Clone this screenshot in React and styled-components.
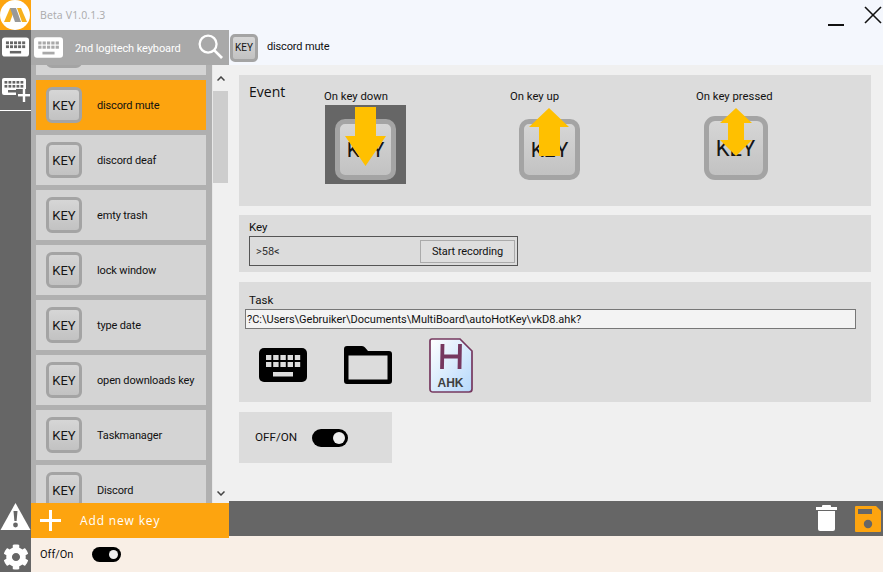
import React from "react";
import styled, { createGlobalStyle } from "styled-components";
import { FaCog } from "react-icons/fa";

const keys = [
  { name: "", clipped: true },
  { name: "discord mute", active: true },
  { name: "discord deaf" },
  { name: "emty trash" },
  { name: "lock window" },
  { name: "type date" },
  { name: "open downloads key" },
  { name: "Taskmanager" },
  { name: "Discord" },
];

const KeyboardIcon = ({ width, height, color = "#fff", cut = "#666" }) => (
  <svg width={width} height={height} viewBox="0 0 48 34">
    <rect width="48" height="34" rx="5" fill={color} />
    {[0, 1, 2, 3, 4, 5, 6, 7, 8, 9].map((i) => (
      <rect key={i} x={7 + (i % 5) * 7.2} y={i < 5 ? 7 : 14} width="5.4" height="5" fill={cut} />
    ))}
    <rect x="14" y="24" width="20" height="4.5" fill={cut} />
  </svg>
);

const LogoMark = () => (
  <svg width="31" height="30" viewBox="0 0 31 30">
    <rect width="31" height="30" fill="#fda40f" />
    <circle cx="15" cy="15" r="15" fill="#fff" />
    <polygon points="4,22 10,8 15,8 10,22" fill="#f7b11c" />
    <polygon points="10,8 16,8 21,22 15,22" fill="#999" />
    <polygon points="17,8 21,8 27,22 22,22" fill="#f7b11c" />
  </svg>
);

const AddKeyboardIcon = () => (
  <svg width="31" height="24" viewBox="0 0 31 24">
    <rect x="2" y="0" width="24" height="17" rx="2" fill="#fff" />
    {[0, 1, 2, 3, 4, 5, 6, 7, 8, 9].map((i) => (
      <rect key={i} x={4.5 + (i % 5) * 4} y={i < 5 ? 3 : 7} width="2.8" height="2.6" fill="#666" />
    ))}
    <rect x="8" y="12" width="12" height="2.5" fill="#666" />
    <rect x="16" y="11" width="15" height="13" fill="#666" />
    <rect x="18" y="16" width="12" height="2.4" fill="#fff" />
    <rect x="22.8" y="11" width="2.4" height="13" fill="#fff" />
  </svg>
);

const WarningIcon = () => (
  <svg width="31" height="29" viewBox="0 0 31 29">
    <polygon points="15.5,1 30.5,28 0.5,28" fill="#fff" />
    <polygon points="13.5,9 17.5,9 16.6,19 14.4,19" fill="#666" />
    <circle cx="15.5" cy="23" r="2.4" fill="#666" />
  </svg>
);

const SearchIcon = () => (
  <SearchSvg width="25" height="25" viewBox="0 0 26 26" fill="none" stroke="#fff">
    <circle cx="10.5" cy="10.5" r="8.8" strokeWidth="2.4" />
    <line x1="17" y1="17" x2="25" y2="25" strokeWidth="2.8" />
  </SearchSvg>
);

const PlusIcon = () => (
  <svg width="21" height="21" viewBox="0 0 21 21">
    <rect x="9" width="3" height="21" fill="#fff" />
    <rect y="9" width="21" height="3" fill="#fff" />
  </svg>
);

const FolderIcon = () => (
  <svg width="48" height="39" viewBox="0 0 48 39">
    <path
      d="M3 0 H18 Q20 0 21 1.5 L24 5 H45 Q48 5 48 8 V35 Q48 38 45 38 H3 Q0 38 0 35 V3 Q0 0 3 0 Z"
      fill="#000"
    />
    <rect x="4.5" y="9.5" width="39" height="24" fill="#dcdcdc" />
  </svg>
);

const AhkIcon = () => (
  <svg width="44" height="55" viewBox="0 0 44 55">
    <defs>
      <linearGradient id="ahkFill" x1="0" y1="0" x2="1" y2="1">
        <stop offset="0" stopColor="#ffffff" />
        <stop offset="1" stopColor="#b5d8fb" />
      </linearGradient>
    </defs>
    <path
      d="M3 1 H31 L43 13 V51 Q43 54 40 54 H4 Q1 54 1 51 V3 Q1 1 3 1 Z"
      fill="url(#ahkFill)"
      stroke="#76385f"
      strokeWidth="1.7"
    />
    <path d="M13.5 6 L13 31 M31 6 L30.5 31 M13 18.5 H31" stroke="#76385f" strokeWidth="3.8" fill="none" />
    <AhkLabel x="21.5" y="49">AHK</AhkLabel>
  </svg>
);

const TrashIcon = () => (
  <svg width="21" height="27" viewBox="0 0 21 27">
    <rect y="2" width="21" height="3" fill="#fff" />
    <rect x="6" width="9" height="3" rx="1" fill="#fff" />
    <path d="M2 6 H19 V24 Q19 26 17 26 H4 Q2 26 2 24 Z" fill="#fff" />
  </svg>
);

const SaveIcon = () => (
  <svg width="26" height="26" viewBox="0 0 26 26">
    <path d="M1 0 H21 L26 5 V25 Q26 26 25 26 H1 Q0 26 0 25 V1 Q0 0 1 0 Z" fill="#fda40f" />
    <rect x="3" y="3" width="14" height="5" fill="#666" />
    <circle cx="13" cy="18" r="4.2" fill="#666" />
  </svg>
);

const Arrow = ({ kind }) => {
  if (kind === "down") {
    return (
      <ArrowSvg width="41" height="59" viewBox="0 0 41 59" $left={20} $top={2}>
        <polygon points="10,0 31,0 31,29 41,29 20.5,59 0,29 10,29" fill="#ffc000" />
      </ArrowSvg>
    );
  }
  if (kind === "up") {
    return (
      <ArrowSvg width="40" height="48" viewBox="0 0 40 48" $left={20} $top={3}>
        <polygon points="20,0 40,19 31,19 31,48 10,48 10,19 0,19" fill="#ffc000" />
      </ArrowSvg>
    );
  }
  return (
    <ArrowSvg width="32" height="48" viewBox="0 0 32 48" $left={25} $top={3}>
      <polygon points="16,0 32,15 24,15 24,32 32,32 16,48 0,32 8,32 8,15 0,15" fill="#ffc000" />
    </ArrowSvg>
  );
};

function App() {
  return (
    <>
      <GlobalStyle />
      <Page>
        <Rail>
          <LogoMark />
          <RailKeyboard>
            <KeyboardIcon width={27} height={20} />
          </RailKeyboard>
          <RailAdd>
            <AddKeyboardIcon />
          </RailAdd>
          <RailLine />
          <RailBottom>
            <WarningIcon />
            <FaCog size={26} color="#fff" />
          </RailBottom>
        </Rail>

        <Body>
          <TitleBar>
            <Version>Beta V1.0.1.3</Version>
            <WindowButtons>
              <MinimizeMark />
              <svg width="18" height="18" viewBox="0 0 18 18" stroke="#111" strokeWidth="1.6">
                <line x1="1" y1="1" x2="17" y2="17" />
                <line x1="17" y1="1" x2="1" y2="17" />
              </svg>
            </WindowButtons>
          </TitleBar>

          <Middle>
            <Sidebar>
              <SearchBar>
                <KeyboardIcon width={29} height={21} cut="#a9a9a9" />
                <BoardName>2nd logitech keyboard</BoardName>
                <SearchIcon />
              </SearchBar>
              <ListArea>
                <KeyList>
                  {keys.map((k, i) => (
                    <KeyRow key={i} $active={k.active}>
                      <KeyCap $size={36} $font={13}>{k.clipped ? "" : "KEY"}</KeyCap>
                      <KeyName>{k.name}</KeyName>
                    </KeyRow>
                  ))}
                </KeyList>
                <Scrollbar>
                  <ScrollArrow>
                    <svg width="8" height="5" viewBox="0 0 8 5" fill="none" stroke="#444" strokeWidth="1.5">
                      <path d="M0.5 4.5 L4 1 L7.5 4.5" />
                    </svg>
                  </ScrollArrow>
                  <ScrollThumb />
                  <ScrollArrowBottom>
                    <svg width="8" height="5" viewBox="0 0 8 5" fill="none" stroke="#444" strokeWidth="1.5">
                      <path d="M0.5 0.5 L4 4 L7.5 0.5" />
                    </svg>
                  </ScrollArrowBottom>
                </Scrollbar>
              </ListArea>
              <AddButton>
                <PlusIcon />
                <AddLabel>Add new key</AddLabel>
              </AddButton>
            </Sidebar>

            <Main>
              <KeyHeader>
                <KeyCap $size={28} $font={10}>KEY</KeyCap>
                <HeaderName>discord mute</HeaderName>
              </KeyHeader>
              <Content>
                <EventPanel>
                  <EventTitle>Event</EventTitle>
                  <EventOption>
                    <OptionLabel>On key down</OptionLabel>
                    <EventTile $selected>
                      <KeyCap $size={61} $font={21} $border={5}>KEY</KeyCap>
                      <Arrow kind="down" />
                    </EventTile>
                  </EventOption>
                  <EventOption>
                    <OptionLabel>On key up</OptionLabel>
                    <EventTile>
                      <KeyCap $size={61} $font={21} $border={5}>KEY</KeyCap>
                      <Arrow kind="up" />
                    </EventTile>
                  </EventOption>
                  <EventOption>
                    <OptionLabel>On key pressed</OptionLabel>
                    <EventTile>
                      <KeyCap $size={64} $font={22} $border={5}>KEY</KeyCap>
                      <Arrow kind="both" />
                    </EventTile>
                  </EventOption>
                </EventPanel>

                <KeyPanel>
                  <FieldLabel>Key</FieldLabel>
                  <RecordBox>
                    <span>&gt;58&lt;</span>
                    <RecordButton>Start recording</RecordButton>
                  </RecordBox>
                </KeyPanel>

                <TaskPanel>
                  <TaskLabel>Task</TaskLabel>
                  <PathBox>?C:\Users\Gebruiker\Documents\MultiBoard\autoHotKey\vkD8.ahk?</PathBox>
                  <TaskIcons>
                    <KeyboardIcon width={48} height={34} color="#000" cut="#dcdcdc" />
                    <FolderIcon />
                    <AhkIcon />
                  </TaskIcons>
                </TaskPanel>

                <SwitchPanel>
                  <SwitchLabel>OFF/ON</SwitchLabel>
                  <Toggle $width={36} $height={18} />
                </SwitchPanel>
              </Content>
              <ActionBar>
                <TrashIcon />
                <SaveIcon />
              </ActionBar>
            </Main>
          </Middle>

          <Footer>
            <FooterLabel>Off/On</FooterLabel>
            <Toggle $width={29} $height={15} />
          </Footer>
        </Body>
      </Page>
    </>
  );
}

export default App;

const GlobalStyle = createGlobalStyle`
  html, body {
    margin: 0;
    padding: 0;
    background: #f0f0f0;
  }
  * {
    box-sizing: border-box;
  }
`;

const Page = styled.div`
  width: 883px;
  height: 572px;
  display: flex;
  overflow: hidden;
  font-family: Roboto, "Liberation Sans", sans-serif;
  font-size: 11px;
  color: #111;
`;

const Rail = styled.div`
  width: 31px;
  flex-shrink: 0;
  background: #666;
  display: flex;
  flex-direction: column;
`;

const RailKeyboard = styled.div`
  display: flex;
  padding: 7px 0 0 2px;
  height: 48px;
`;

const RailAdd = styled.div`
  display: flex;
  height: 32px;
`;

const RailLine = styled.div`
  height: 1px;
  background: #fff;
`;

const RailBottom = styled.div`
  margin-top: auto;
  display: flex;
  flex-direction: column;
  align-items: center;
  gap: 13px;
  padding-bottom: 2px;
`;

const Body = styled.div`
  flex: 1;
  display: flex;
  flex-direction: column;
  min-width: 0;
`;

const TitleBar = styled.div`
  height: 30px;
  background: #f4f7fd;
  display: flex;
  align-items: center;
  justify-content: space-between;
  padding-left: 9px;
`;

const Version = styled.div`
  color: #aaa;
  font-family: "Open Sans", sans-serif;
  font-size: 10.5px;
  letter-spacing: 0.15px;
`;

const WindowButtons = styled.div`
  display: flex;
  align-items: flex-start;
  gap: 20px;
  padding-right: 1px;
  height: 100%;
  padding-top: 6px;
`;

const MinimizeMark = styled.div`
  width: 16px;
  height: 2px;
  background: #111;
  margin-top: 18px;
`;

const Middle = styled.div`
  height: 506px;
  display: flex;
  align-items: flex-start;
`;

const Sidebar = styled.div`
  width: 198px;
  height: 508px;
  flex-shrink: 0;
  display: flex;
  flex-direction: column;
  position: relative;
  z-index: 1;
`;

const SearchBar = styled.div`
  height: 35px;
  background: #a9a9a9;
  display: flex;
  align-items: center;
  padding: 0 6px 0 3px;
  color: #fff;
`;

const SearchSvg = styled.svg`
  margin-top: -3px;
`;

const BoardName = styled.div`
  flex: 1;
  padding-left: 12px;
  font-size: 11px;
  letter-spacing: -0.1px;
  margin-top: 2px;
`;

const ListArea = styled.div`
  height: 438px;
  display: flex;
  overflow: hidden;
`;

const KeyList = styled.div`
  width: 182px;
  background: #b0b0b0;
  border-right: 1px solid #e8e8e8;
  padding-left: 5px;
  padding-right: 6px;
  display: flex;
  flex-direction: column;
  gap: 5px;
  margin-top: -40px;
  height: 478px;
  overflow: hidden;
  flex-shrink: 0;
`;

const KeyRow = styled.div`
  height: 50px;
  flex-shrink: 0;
  background: ${(p) => (p.$active ? "#fda40f" : "#d4d4d4")};
  display: flex;
  align-items: center;
  padding-left: 10px;
  gap: 15px;
`;

const KeyCap = styled.div`
  width: ${(p) => p.$size}px;
  height: ${(p) => p.$size}px;
  flex-shrink: 0;
  border: ${(p) => p.$border || 3}px solid #a4a4a4;
  border-radius: ${(p) => Math.round(p.$size / 6)}px;
  background: linear-gradient(#d6d6d6, #c2c2c2);
  display: flex;
  align-items: center;
  justify-content: center;
  font-size: ${(p) => p.$font}px;
  color: #151515;
`;

const KeyName = styled.div`
  font-size: 11px;
  letter-spacing: -0.15px;
  color: #111;
`;

const Scrollbar = styled.div`
  flex: 1;
  background: #f0f0f0;
  display: flex;
  flex-direction: column;
`;

const ScrollArrow = styled.div`
  height: 26px;
  display: flex;
  align-items: center;
  justify-content: center;
`;

const ScrollThumb = styled.div`
  height: 92px;
  width: 15px;
  background: #cdcdcd;
`;

const ScrollArrowBottom = styled(ScrollArrow)`
  margin-top: auto;
  height: 20px;
`;

const AddButton = styled.div`
  height: 35px;
  background: #fda40f;
  color: #fff;
  display: flex;
  align-items: center;
  padding-left: 9px;
  gap: 19px;
`;

const AddLabel = styled.div`
  font-family: "Open Sans", sans-serif;
  font-size: 12px;
  letter-spacing: 0.85px;
`;

const Main = styled.div`
  flex: 1;
  height: 506px;
  display: flex;
  flex-direction: column;
  min-width: 0;
`;

const KeyHeader = styled.div`
  height: 35px;
  background: #f4f7fd;
  display: flex;
  align-items: center;
  padding-left: 1px;
  gap: 9px;
`;

const HeaderName = styled.div`
  font-size: 11px;
  letter-spacing: -0.15px;
  margin-top: -3px;
`;

const Content = styled.div`
  flex: 1;
  background: #f0f0f0;
  padding: 10px 12px 0 10px;
  display: flex;
  flex-direction: column;
  gap: 10px;
`;

const Panel = styled.div`
  background: #dcdcdc;
`;

const EventPanel = styled(Panel)`
  height: 131px;
  margin-bottom: -1px;
  display: grid;
  grid-template-columns: 75px 186px 186px 1fr;
  padding: 9px 0 0 10px;
`;

const EventTitle = styled.div`
  font-family: "Open Sans", sans-serif;
  font-size: 14px;
  margin-top: -2px;
`;

const EventOption = styled.div`
  display: flex;
  flex-direction: column;
  padding-top: 5px;
`;

const OptionLabel = styled.div`
  font-size: 11.3px;
  height: 16px;
  line-height: 16px;
`;

const EventTile = styled.div`
  position: relative;
  width: 81px;
  height: 79px;
  background: ${(p) => (p.$selected ? "#666" : "transparent")};
  display: flex;
  align-items: flex-end;
  justify-content: center;
  padding-bottom: 4px;
  margin-left: ${(p) => (p.$selected ? "1px" : "-1px")};
`;

const ArrowSvg = styled.svg`
  position: absolute;
  left: ${(p) => p.$left}px;
  top: ${(p) => p.$top}px;
`;

const KeyPanel = styled(Panel)`
  height: 57px;
  padding: 5px 10px 0;
`;

const FieldLabel = styled.div`
  font-size: 11.5px;
  height: 16px;
  line-height: 14px;
`;

const TaskLabel = styled(FieldLabel)`
  margin-left: 4px;
`;

const RecordBox = styled.div`
  width: 269px;
  height: 30px;
  border: 1px solid #555;
  display: flex;
  align-items: center;
  justify-content: space-between;
  padding: 0 2px 0 6px;
  font-size: 11px;
  color: #333;
`;

const RecordButton = styled.div`
  width: 95px;
  height: 23px;
  border: 1px solid #aaa;
  background: #dedede;
  display: flex;
  align-items: center;
  justify-content: center;
  letter-spacing: -0.1px;
  color: #111;
`;

const TaskPanel = styled(Panel)`
  height: 120px;
  padding: 11px 15px 0 6px;
`;

const PathBox = styled.div`
  height: 20px;
  border: 1px solid #777;
  background: #f3f3f3;
  display: flex;
  align-items: center;
  padding-left: 1px;
  font-size: 11px;
`;

const TaskIcons = styled.div`
  display: flex;
  align-items: center;
  margin-top: 8px;
  padding-left: 14px;
  gap: 37px;
  height: 56px;
`;

const AhkLabel = styled.text`
  font-family: "Liberation Sans", sans-serif;
  font-size: 12px;
  font-weight: 700;
  fill: #3f3f3f;
  text-anchor: middle;
`;

const SwitchPanel = styled(Panel)`
  width: 153px;
  height: 51px;
  display: flex;
  align-items: center;
  padding-left: 16px;
  font-size: 11.7px;
`;

const SwitchLabel = styled.span`
  width: 57px;
  margin-top: -1px;
`;

const Toggle = styled.div`
  width: ${(p) => p.$width}px;
  height: ${(p) => p.$height}px;
  border-radius: ${(p) => p.$height / 2}px;
  background: #000;
  display: flex;
  align-items: center;
  justify-content: flex-end;
  padding-right: 3px;
  &::after {
    content: "";
    width: ${(p) => p.$height - 6}px;
    height: ${(p) => p.$height - 6}px;
    border-radius: 50%;
    background: #eee;
  }
`;

const ActionBar = styled.div`
  height: 35px;
  background: #666;
  display: flex;
  align-items: center;
  justify-content: flex-end;
  gap: 18px;
  padding-right: 2px;
`;

const Footer = styled.div`
  height: 36px;
  background: #f9efe6;
  display: flex;
  align-items: center;
  padding-left: 9px;
  font-size: 11px;
`;

const FooterLabel = styled.span`
  width: 52px;
`;
